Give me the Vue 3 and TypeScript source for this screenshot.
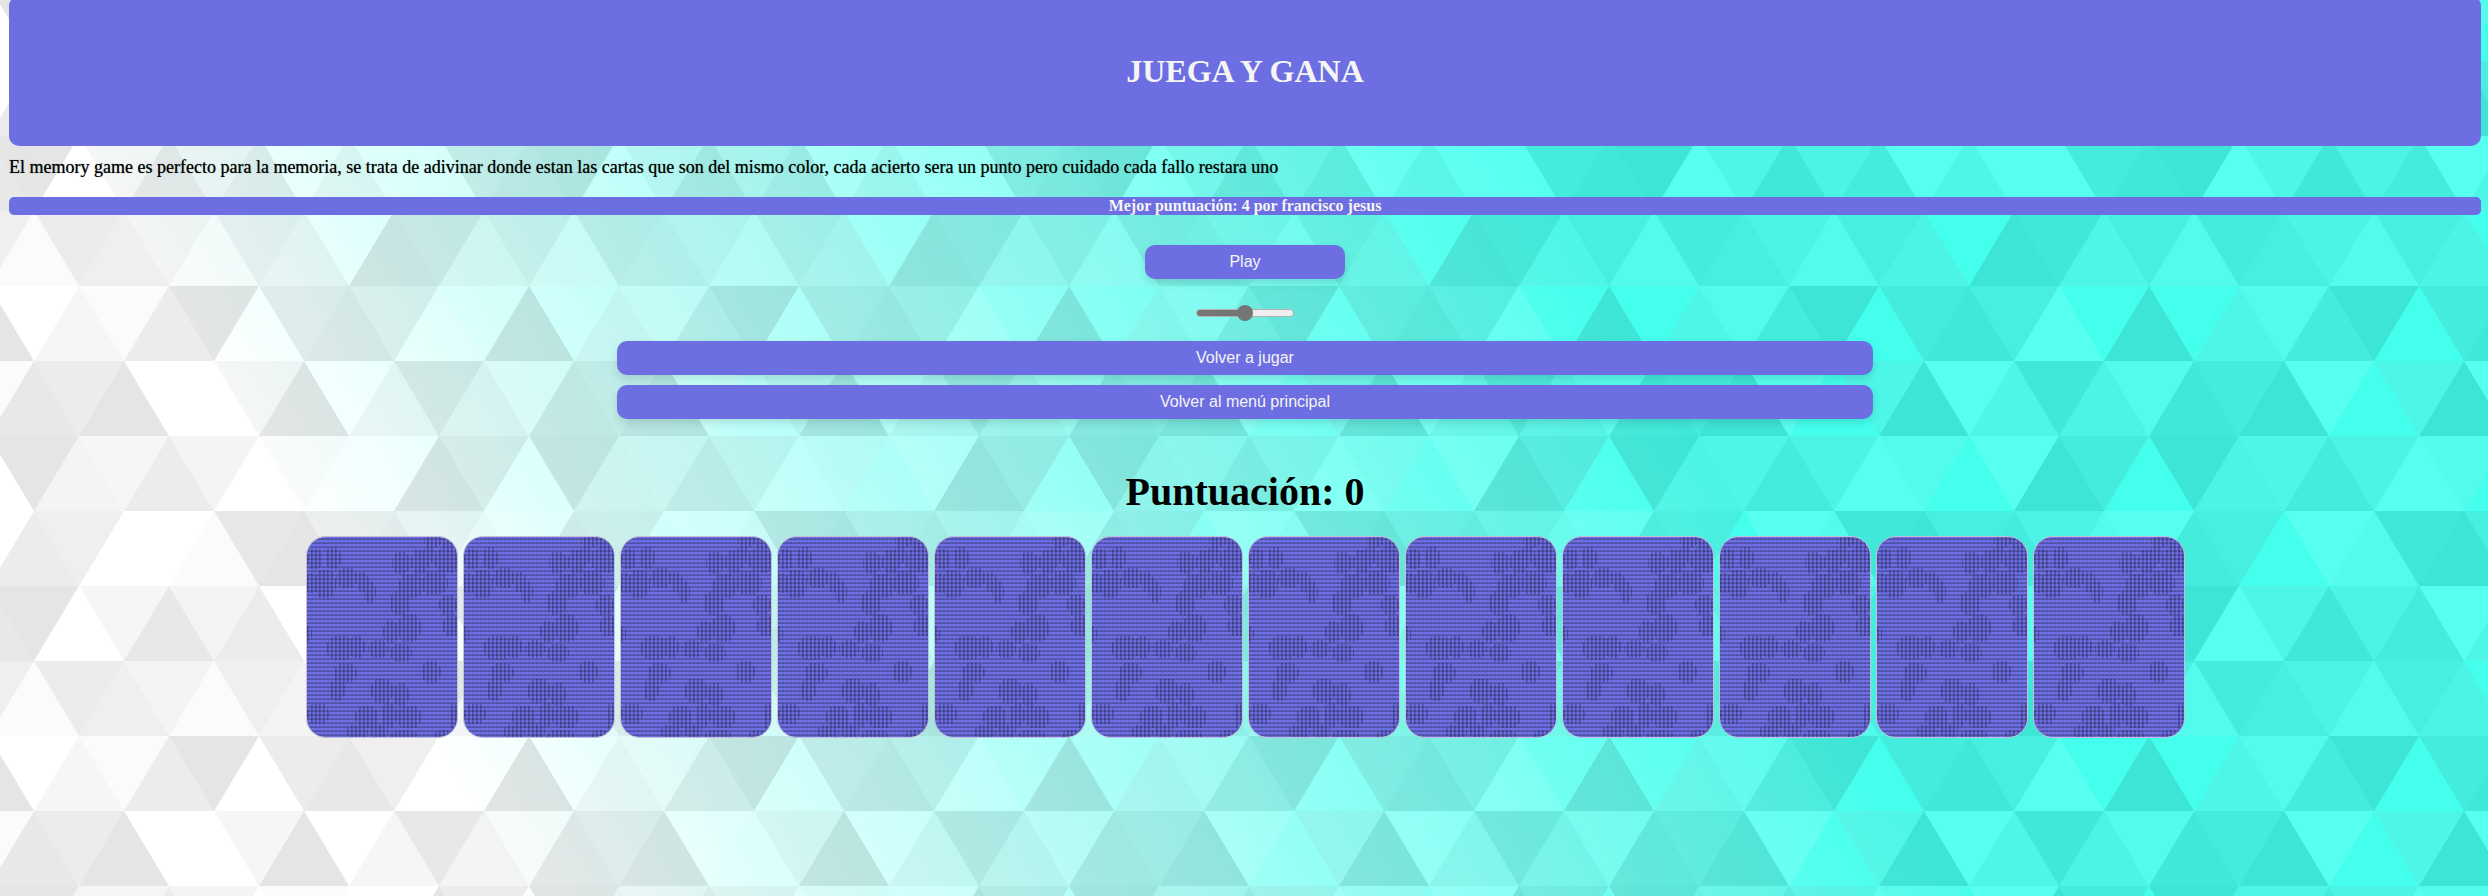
<script setup lang="ts">
import { ref } from 'vue'

type Tile = [points: string, fill: string]

const tiles: Tile[] = [
  ['90 150 0 300 180 300', '#444'],
  ['90 150 180 0 0 0', '#000'],
  ['270 150 360 0 180 0', '#aaa'],
  ['450 150 360 300 540 300', '#ddd'],
  ['450 150 540 0 360 0', '#999'],
  ['630 150 540 300 720 300', '#000'],
  ['630 150 720 0 540 0', '#ddd'],
  ['810 150 720 300 900 300', '#444'],
  ['810 150 900 0 720 0', '#fff'],
  ['990 150 900 300 1080 300', '#ddd'],
  ['990 150 1080 0 900 0', '#444'],
  ['90 450 0 600 180 600', '#ddd'],
  ['90 450 180 300 0 300', '#000'],
  ['270 450 180 600 360 600', '#666'],
  ['270 450 360 300 180 300', '#aaa'],
  ['450 450 360 600 540 600', '#ddd'],
  ['450 450 540 300 360 300', '#999'],
  ['630 450 540 600 720 600', '#999'],
  ['630 450 720 300 540 300', '#fff'],
  ['810 450 720 600 900 600', '#000'],
  ['810 450 900 300 720 300', '#fff'],
  ['990 450 900 600 1080 600', '#aaa'],
  ['990 450 1080 300 900 300', '#444'],
  ['90 750 0 900 180 900', '#222'],
  ['270 750 180 900 360 900', '#000'],
  ['270 750 360 600 180 600', '#ddd'],
  ['450 750 540 600 360 600', '#000'],
  ['630 750 540 900 720 900', '#000'],
  ['630 750 720 600 540 600', '#444'],
  ['810 750 720 900 900 900', '#aaa'],
  ['810 750 900 600 720 600', '#666'],
  ['990 750 900 900 1080 900', '#999'],
  ['180 0 90 150 270 150', '#999'],
  ['360 0 270 150 450 150', '#444'],
  ['540 0 450 150 630 150', '#fff'],
  ['900 0 810 150 990 150', '#000'],
  ['0 300 -90 450 90 450', '#222'],
  ['0 300 90 150 -90 150', '#fff'],
  ['180 300 90 450 270 450', '#fff'],
  ['180 300 270 150 90 150', '#666'],
  ['360 300 270 450 450 450', '#222'],
  ['360 300 450 150 270 150', '#fff'],
  ['540 300 450 450 630 450', '#444'],
  ['540 300 630 150 450 150', '#222'],
  ['720 300 630 450 810 450', '#aaa'],
  ['720 300 810 150 630 150', '#666'],
  ['900 300 810 450 990 450', '#fff'],
  ['900 300 990 150 810 150', '#999'],
  ['0 600 -90 750 90 750', '#000'],
  ['0 600 90 450 -90 450', '#666'],
  ['180 600 90 750 270 750', '#aaa'],
  ['180 600 270 450 90 450', '#444'],
  ['360 600 270 750 450 750', '#444'],
  ['360 600 450 450 270 450', '#999'],
  ['540 600 630 450 450 450', '#666'],
  ['720 600 630 750 810 750', '#222'],
  ['900 600 810 750 990 750', '#fff'],
  ['900 600 990 450 810 450', '#222'],
  ['0 900 90 750 -90 750', '#ddd'],
  ['180 900 270 750 90 750', '#444'],
  ['360 900 450 750 270 750', '#fff'],
  ['540 900 630 750 450 750', '#aaa'],
  ['720 900 810 750 630 750', '#fff'],
  ['900 900 990 750 810 750', '#222'],
  ['1080 300 990 450 1170 450', '#222'],
  ['1080 300 1170 150 990 150', '#fff'],
  ['1080 600 990 750 1170 750', '#000'],
  ['1080 600 1170 450 990 450', '#666'],
  ['1080 900 1170 750 990 750', '#ddd'],
]

const volume = ref(50)
const score = ref(0)
const cards = 12

// Striped blobs on the card back: centre x, centre y, half width, half height
const blobs: number[][] = [
  [8, 22, 8, 10], [26, 21, 8, 11], [4, 46, 6, 10], [18, 47, 11, 14], [40, 41, 11, 10], [56, 45, 6, 10], [63, 55, 6, 11],
  [126, 4, 9, 6], [143, 7, 8, 10],
  [94, 26, 9, 11], [113, 25, 9, 12], [122, 18, 7, 8], [140, 24, 13, 12],
  [104, 49, 13, 12], [128, 46, 13, 12], [93, 66, 11, 12], [141, 68, 9, 10],
  [84, 95, 8, 11], [102, 91, 12, 14], [145, 89, 10, 10], [1, 97, 4, 8],
  [33, 111, 14, 12], [50, 110, 8, 11], [71, 112, 10, 9], [94, 116, 11, 9],
  [38, 136, 12, 10], [124, 135, 10, 11], [30, 153, 8, 11], [75, 154, 12, 12], [94, 158, 8, 12],
  [11, 177, 11, 10], [60, 180, 12, 11], [82, 178, 8, 12], [102, 180, 13, 11], [50, 195, 11, 7], [72, 194, 9, 7],
  [97, 198, 13, 5], [136, 198, 8, 5], [147, 180, 4, 14],
]

function outline([x, y, w, h]: number[]): string {
  const s = Math.round(w / 2)
  const t = Math.round(h / 3)
  return (
    `M${x - w} ${y - t}L${x - s} ${y - h}H${x + s}L${x + w} ${y - t}` +
    `V${y + t}L${x + s} ${y + h}H${x - s}L${x - w} ${y + t}Z`
  )
}

const blobPath = blobs.map(outline).join('')
</script>

<template>
  <div class="page">
    <svg class="backdrop" aria-hidden="true">
      <defs>
        <linearGradient id="sky" gradientUnits="userSpaceOnUse" x1="0" x2="0" y1="0" y2="1244" gradientTransform="rotate(240)">
          <stop offset="0" stop-color="#fff" />
          <stop offset="1" stop-color="#4fe" />
        </linearGradient>
        <pattern id="mosaic" patternUnits="userSpaceOnUse" width="540" height="450" x="-11" y="-14" viewBox="0 0 1080 900">
          <g fill-opacity="0.1">
            <polygon v-for="[points, fill] in tiles" :key="points" :points="points" :fill="fill" />
          </g>
        </pattern>
        <pattern id="rows" patternUnits="userSpaceOnUse" width="4" height="4">
          <rect y="1" width="4" height="1" fill="#25254d" fill-opacity="0.2" />
          <rect y="2" width="4" height="1" fill="#25254d" fill-opacity="0.35" />
          <rect y="1" width="2" height="2" fill="#25254d" fill-opacity="0.15" />
        </pattern>
        <pattern id="columns" patternUnits="userSpaceOnUse" width="4" height="4">
          <rect width="1" height="4" fill="#25254d" fill-opacity="0.4" />
          <rect x="1" width="1" height="4" fill="#25254d" fill-opacity="0.25" />
        </pattern>
        <symbol id="card-back" viewBox="0 0 150 200">
          <rect width="150" height="200" fill="url(#rows)" />
          <path :d="blobPath" fill="url(#columns)" />
        </symbol>
      </defs>
      <rect width="100%" height="100%" fill="url(#sky)" />
      <rect width="100%" height="100%" fill="url(#mosaic)" />
    </svg>

    <header class="banner"><h1>JUEGA Y GANA</h1></header>
    <p class="intro">
      El memory game es perfecto para la memoria, se trata de adivinar donde estan las cartas que son del mismo color,
      cada acierto sera un punto pero cuidado cada fallo restara uno
    </p>
    <p class="best">Mejor puntuación: 4 por francisco jesus</p>

    <div class="controls">
      <button class="btn play" type="button">Play</button>
      <input v-model.number="volume" class="volume" type="range" min="0" max="100" aria-label="Volumen" />
      <button class="btn wide" type="button">Volver a jugar</button>
      <button class="btn wide" type="button" @click="score = 0">Volver al menú principal</button>
    </div>

    <h2 class="score">Puntuación: {{ score }}</h2>
    <div class="cards">
      <button v-for="n in cards" :key="n" class="card" type="button" :aria-label="`Carta ${n}`">
        <svg aria-hidden="true"><use href="#card-back" /></svg>
      </button>
    </div>
  </div>
</template>

<style>
body {
  margin: 0;
}
</style>

<style scoped>
.page {
  position: relative;
  z-index: 0;
  display: flow-root;
  box-sizing: border-box;
  min-height: 100vh;
  padding: 0 7px 0 9px;
  font-family: "Liberation Serif", serif;
  font-size: 18px;
  color: #000;
}

.backdrop {
  position: absolute;
  inset: 0;
  z-index: -1;
  width: 100%;
  height: 100%;
}

.banner {
  display: flex;
  align-items: center;
  justify-content: center;
  height: 150px;
  margin-top: -4px;
  border-radius: 10px;
  background: #6c6ee2;
  color: #f5f5f5;
}

h1 {
  margin: 0;
  font-size: 32px;
  line-height: 36px;
}

.intro {
  margin: 10px 0 0;
  line-height: 22px;
  text-shadow: 0 0 1px rgb(0 0 0 / 60%);
}

.best {
  margin: 19px 0 0;
  border-radius: 5px;
  background: #6c6ee2;
  color: #f5f5f5;
  font-size: 16px;
  font-weight: bold;
  line-height: 18px;
  text-align: center;
}

.controls {
  display: flex;
  flex-direction: column;
  align-items: center;
  gap: 10px;
  margin-top: 30px;
}

.btn {
  height: 34px;
  padding: 0;
  border: 0;
  border-radius: 10px;
  background: #6c6ee2;
  box-shadow: 0 4px 8px rgb(0 0 0 / 12%);
  color: #f5f5f5;
  font-family: "Liberation Sans", sans-serif;
  font-size: 16px;
}

.play {
  width: 200px;
}

.wide {
  width: 1256px;
  max-width: 100%;
}

.volume {
  appearance: none;
  width: 98px;
  height: 16px;
  margin: 16px 0 10px;
  background: transparent;
}

.volume::-webkit-slider-runnable-track {
  box-sizing: border-box;
  height: 8px;
  border: 1px solid #b2b2b2;
  border-radius: 4px;
  background: linear-gradient(to right, #757575 50%, #efefef 50%) border-box;
}

.volume::-webkit-slider-thumb {
  appearance: none;
  width: 16px;
  height: 16px;
  margin-top: -5px;
  border-radius: 50%;
  background: #757575;
}

.score {
  margin: 50px 0 0;
  font-size: 40px;
  line-height: 46px;
  text-align: center;
}

.cards {
  display: flex;
  flex-wrap: wrap;
  justify-content: center;
  gap: 5px;
  margin-top: 21px;
}

.card {
  overflow: hidden;
  box-sizing: border-box;
  width: 152px;
  height: 202px;
  padding: 0;
  border: 1px solid #c5c0d4;
  border-radius: 20px;
  background: #6c6ee2;
}

.card svg {
  display: block;
  width: 150px;
  height: 200px;
}
</style>
